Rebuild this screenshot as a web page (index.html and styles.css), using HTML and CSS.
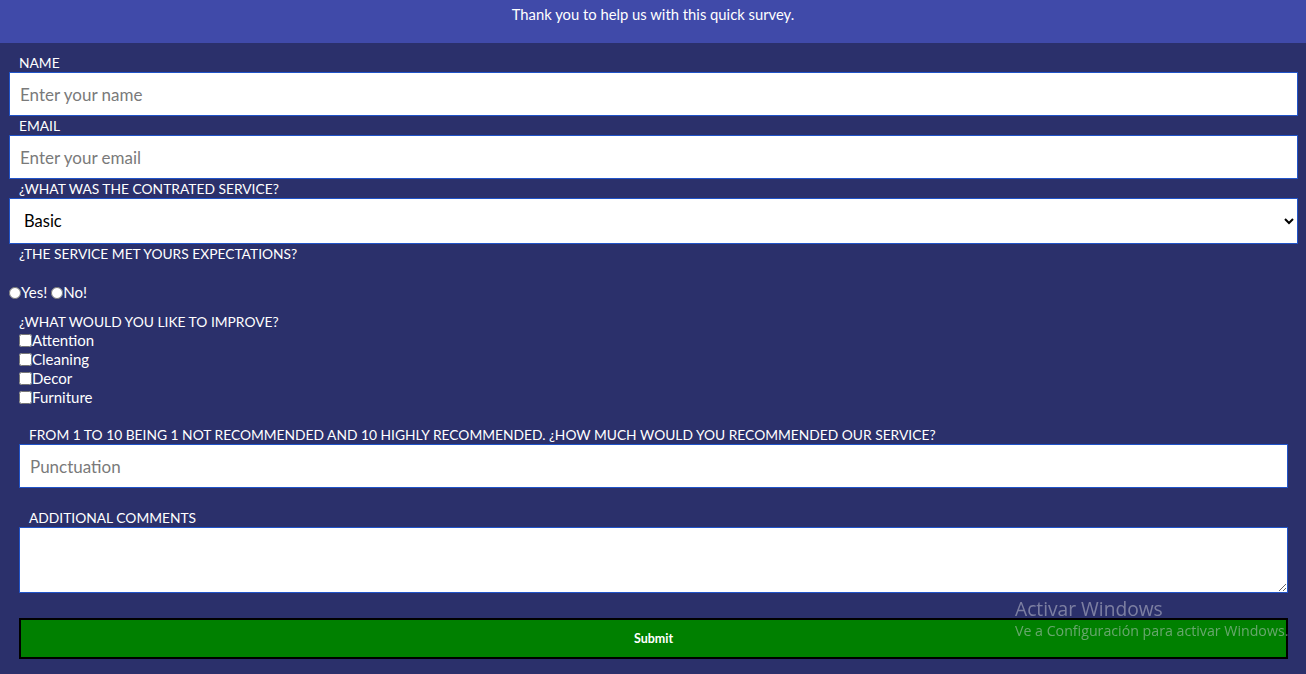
FILE: index.html
```html
<!DOCTYPE html>
<html lang="en">
<head>
<meta charset="utf-8">
<title>Survey</title>
<link rel="stylesheet" href="styles.css">
</head>
<body>
<header class="top">
  <p class="top-text">Thank you to help us with this quick survey.</p>
</header>
<form class="survey">
  <label class="lbl" for="name">NAME</label>
  <input class="field" id="name" type="text" placeholder="Enter your name">
  <label class="lbl" for="email">EMAIL</label>
  <input class="field" id="email" type="email" placeholder="Enter your email">
  <label class="lbl" for="service">¿WHAT WAS THE CONTRATED SERVICE?</label>
  <select class="field sel" id="service">
    <option>Basic</option>
    <option>Premium</option>
  </select>
  <p class="lbl">¿THE SERVICE MET YOURS EXPECTATIONS?</p>
  <div class="radios">
    <input class="radio" type="radio" name="met" id="yes"><label for="yes">Yes!</label>
    <input class="radio" type="radio" name="met" id="no"><label for="no">No!</label>
  </div>
  <p class="lbl lbl-improve">¿WHAT WOULD YOU LIKE TO IMPROVE?</p>
  <div class="checks">
    <div class="check"><input type="checkbox" id="c1"><label for="c1">Attention</label></div>
    <div class="check"><input type="checkbox" id="c2"><label for="c2">Cleaning</label></div>
    <div class="check"><input type="checkbox" id="c3"><label for="c3">Decor</label></div>
    <div class="check"><input type="checkbox" id="c4"><label for="c4">Furniture</label></div>
  </div>
  <div class="inner">
    <label class="lbl lbl-rate" for="score">FROM 1 TO 10 BEING 1 NOT RECOMMENDED AND 10 HIGHLY RECOMMENDED. ¿HOW MUCH WOULD YOU RECOMMENDED OUR SERVICE?</label>
    <input class="field" id="score" type="number" placeholder="Punctuation">
    <label class="lbl lbl-comments" for="comments">ADDITIONAL COMMENTS</label>
    <textarea class="field area" id="comments"></textarea>
    <button class="submit" type="submit">Submit</button>
  </div>
</form>
<div class="activate">
  <div class="activate-title">Activar Windows</div>
  <div class="activate-sub">Ve a Configuración para activar Windows.</div>
</div>
</body>
</html>
```
FILE: styles.css
```css
html, body {
  margin: 0;
  padding: 0;
}
body {
  background: #2b306b;
  font-family: Lato, "Open Sans", sans-serif;
  color: #ffffff;
  height: 674px;
  overflow: hidden;
}
.top {
  background: #404aa9;
  height: 43px;
  box-sizing: border-box;
  padding-top: 5px;
}
.top-text {
  margin: 0;
  text-align: center;
  font-size: 14.8px;
  line-height: 18px;
}
.survey {
  padding: 10px 8px 0 9px;
  display: flex;
  flex-direction: column;
}
.lbl {
  display: block;
  margin: 0;
  padding-left: 10px;
  font-size: 13.8px;
  line-height: 19px;
}
.field {
  display: block;
  box-sizing: border-box;
  width: 100%;
  height: 44px;
  margin: 0;
  border: 1px solid #2154c8;
  border-radius: 0;
  background: #ffffff;
  padding: 0 10px;
  font-family: Lato, "Open Sans", sans-serif;
  font-size: 17px;
  color: #000;
  outline: none;
}
.field::placeholder {
  color: #7a7a7a;
}
.sel {
  height: 46px;
  padding: 0 10px;
  font-size: 16.5px;
}
.radios {
  margin-top: 20px;
  display: flex;
  align-items: center;
  font-size: 15px;
  line-height: 19px;
}
.radio {
  margin: 0;
  width: 12px;
  height: 12px;
}
.radios label + .radio {
  margin-left: 4px;
}
.lbl-improve {
  margin-top: 10px;
}
.checks {
  padding-left: 10px;
  display: flex;
  flex-direction: column;
}
.check {
  display: flex;
  align-items: center;
  font-size: 15px;
  line-height: 19px;
}
.check input {
  margin: 0;
  width: 13px;
  height: 13px;
}
.inner {
  margin: 0 10px;
  display: flex;
  flex-direction: column;
}
.lbl-rate {
  margin-top: 18px;
}
.lbl-comments {
  margin-top: 20px;
}
.area {
  height: 66px;
  resize: vertical;
  padding: 2px 10px;
}
.submit {
  margin-top: 25px;
  height: 41px;
  background: #008000;
  border: 2px solid #000;
  color: #fff;
  font-family: Lato, "Open Sans", sans-serif;
  font-size: 12.5px;
  font-weight: 700;
  padding: 0;
}
.activate {
  position: fixed;
  left: 1015px;
  top: 596px;
  color: rgba(205, 205, 215, 0.5);
  pointer-events: none;
  font-family: "Open Sans", Lato, sans-serif;
}
.activate-title {
  font-size: 19.2px;
  line-height: 25px;
}
.activate-sub {
  font-size: 14.2px;
  line-height: 20px;
}
```
